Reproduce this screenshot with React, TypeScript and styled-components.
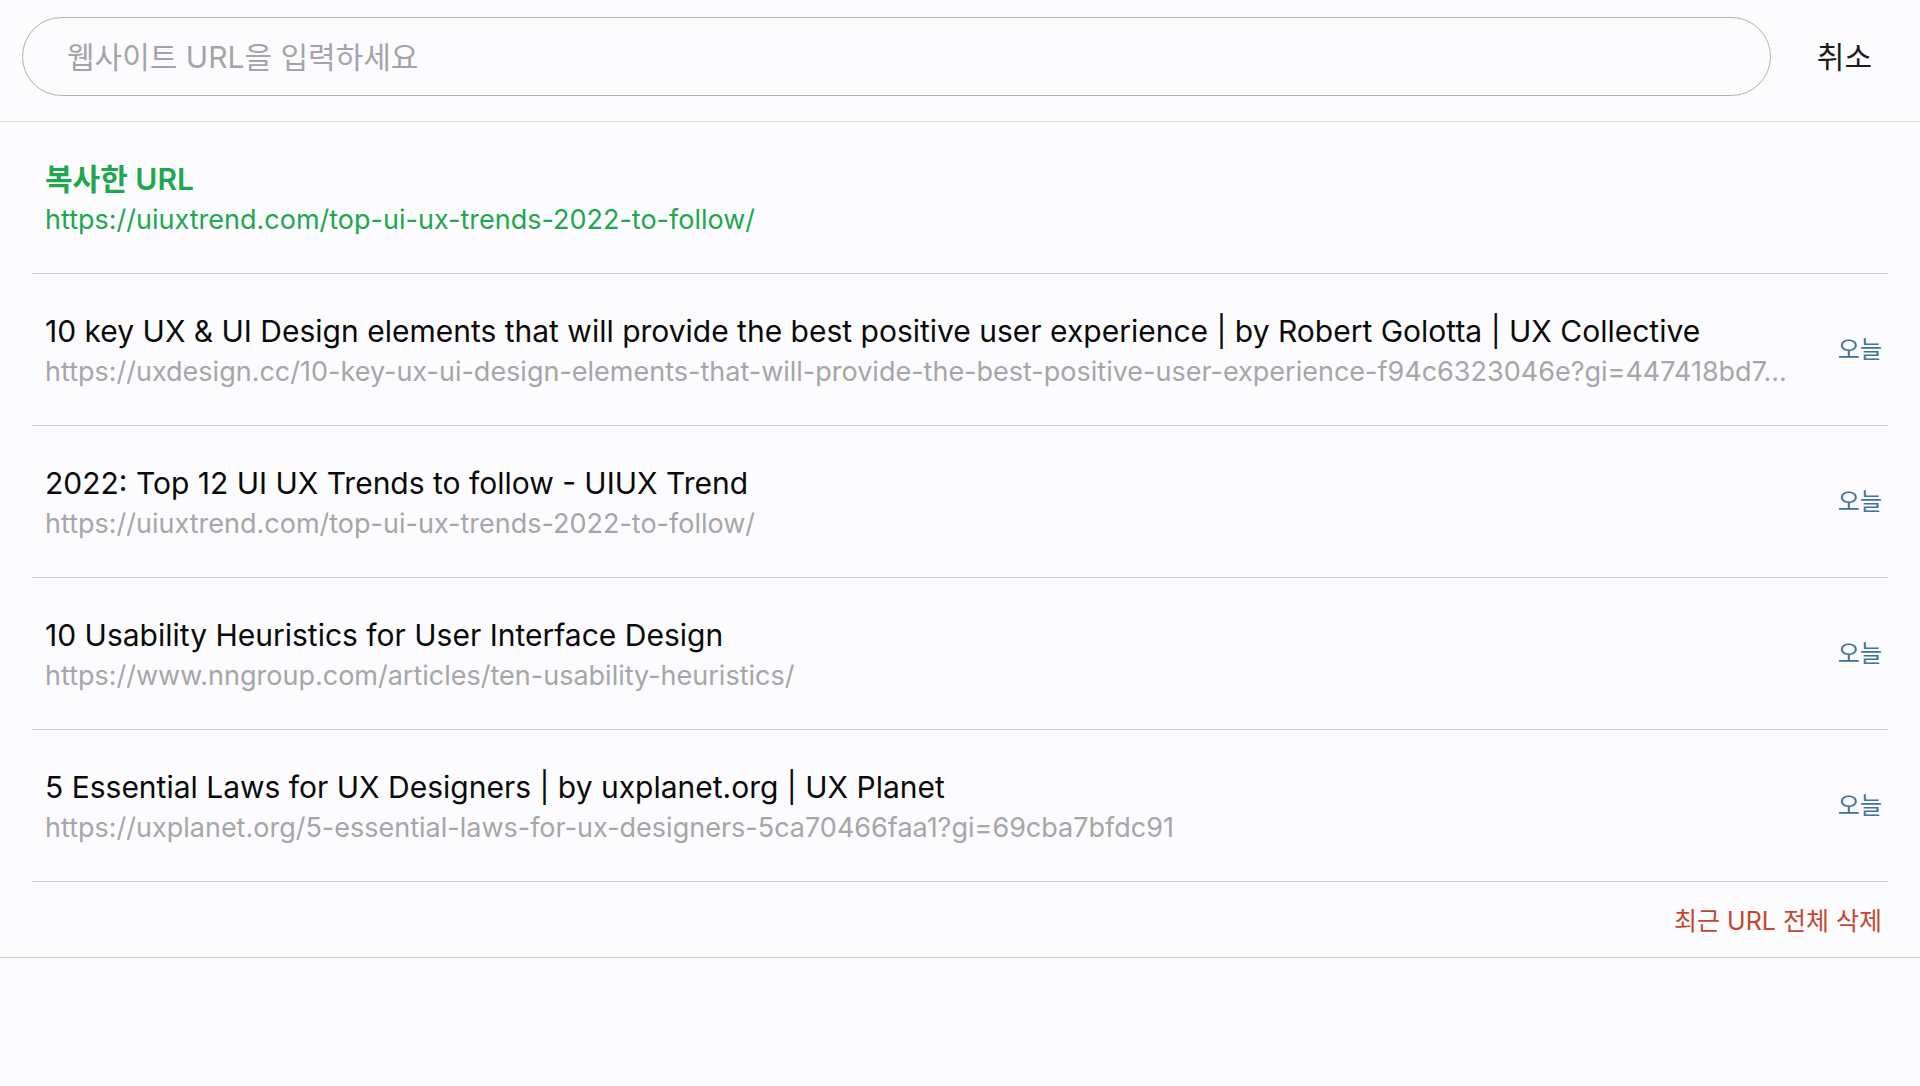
import React from 'react';
import styled, { createGlobalStyle } from 'styled-components';

const Global = createGlobalStyle`
  * { box-sizing: border-box; }
  body { margin: 0; background: #fcfcfe; color: #0a0a0a; font-family: Inter, "Noto Sans CJK KR", sans-serif; }
  button, input { font: inherit; }
`;

const SearchBar = styled.form`
  display: flex;
  align-items: center;
  gap: 24px;
  padding: 17px 26px 25px 22px;
  border-bottom: 1px solid #dcdad0;
`;

const UrlInput = styled.input`
  flex: 1;
  min-width: 0;
  height: 79px;
  padding: 0 44px;
  border: 1px solid #b4b4a0;
  border-radius: 40px;
  background: transparent;
  color: #0a0a0a;
  font-size: 30px;
  outline: none;
  &::placeholder { color: #a4a4a8; opacity: 1; }
`;

const CancelButton = styled.button`
  padding: 8px 22px;
  border: 0;
  background: none;
  color: #1c1c1c;
  font-size: 30px;
  line-height: 40px;
`;

const Panel = styled.main`
  padding: 0 32px;
  border-bottom: 1px solid #cfcfcf;
`;

const List = styled.ul`
  margin: 0;
  padding: 0;
  list-style: none;
`;

const Row = styled.li`
  display: flex;
  align-items: center;
  height: 152px;
  padding: 0 6px 0 13px;
  border-bottom: 1px solid #c8c8cc;
`;

const Entry = styled.a<{ $copied?: boolean }>`
  flex: 1;
  min-width: 0;
  padding-top: 3px;
  color: ${(p) => (p.$copied ? '#1fa750' : '#0a0a0a')};
  text-decoration: none;
`;

const Title = styled.span<{ $strong?: boolean }>`
  display: block;
  font-size: 30px;
  line-height: 42px;
  font-weight: ${(p) => (p.$strong ? 600 : 400)};
  overflow: hidden;
  text-overflow: ellipsis;
  white-space: nowrap;
`;

const Address = styled.span<{ $copied?: boolean }>`
  display: block;
  color: ${(p) => (p.$copied ? 'inherit' : '#a6a6a8')};
  font-size: 27px;
  line-height: 40px;
  overflow: hidden;
  text-overflow: ellipsis;
  white-space: nowrap;
`;

const Day = styled.time`
  margin-left: 32px;
  color: #41749a;
  font-size: 24px;
  line-height: 36px;
`;

const Footer = styled.footer`
  display: flex;
  align-items: center;
  justify-content: flex-end;
  height: 75px;
  padding: 3px 6px 0 0;
`;

const ClearButton = styled.button`
  padding: 0;
  border: 0;
  background: none;
  color: #c4482f;
  font-size: 25px;
  line-height: 36px;
`;

const copiedUrl = 'https://uiuxtrend.com/top-ui-ux-trends-2022-to-follow/';

const recent = [
  {
    title: '10 key UX & UI Design elements that will provide the best positive user experience | by Robert Golotta | UX Collective',
    url: 'https://uxdesign.cc/10-key-ux-ui-design-elements-that-will-provide-the-best-positive-user-experience-f94c6323046e?gi=447418bd7...',
  },
  { title: '2022: Top 12 UI UX Trends to follow - UIUX Trend', url: copiedUrl },
  { title: '10 Usability Heuristics for User Interface Design', url: 'https://www.nngroup.com/articles/ten-usability-heuristics/' },
  {
    title: '5 Essential Laws for UX Designers | by uxplanet.org | UX Planet',
    url: 'https://uxplanet.org/5-essential-laws-for-ux-designers-5ca70466faa1?gi=69cba7bfdc91',
  },
];

export default function App() {
  return (
    <>
      <Global />
      <SearchBar onSubmit={(e) => e.preventDefault()}>
        <UrlInput type="text" aria-label="웹사이트 URL" placeholder="웹사이트 URL을 입력하세요" />
        <CancelButton type="button">취소</CancelButton>
      </SearchBar>
      <Panel>
        <List>
          <Row>
            <Entry href={copiedUrl} $copied>
              <Title $strong>복사한 URL</Title>
              <Address $copied>{copiedUrl}</Address>
            </Entry>
          </Row>
          {recent.map((item) => (
            <Row key={item.title}>
              <Entry href={item.url}>
                <Title>{item.title}</Title>
                <Address>{item.url}</Address>
              </Entry>
              <Day>오늘</Day>
            </Row>
          ))}
        </List>
        <Footer>
          <ClearButton type="button">최근 URL 전체 삭제</ClearButton>
        </Footer>
      </Panel>
    </>
  );
}
